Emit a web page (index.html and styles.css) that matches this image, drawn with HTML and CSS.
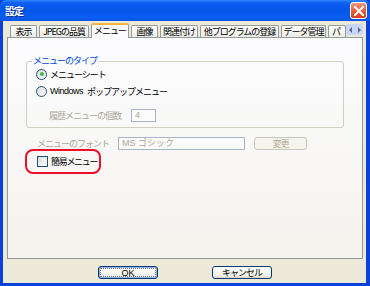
FILE: index.html
```html
<!DOCTYPE html>
<html lang="ja">
<head>
    <meta charset="UTF-8">
    <title>設定</title>
    <link rel="stylesheet" href="styles.css">
</head>
<body>
    <div class="window">
        <div class="titlebar">
            <span class="title">設定</span>
            <span class="close">
                <svg width="10" height="10" viewBox="0 0 10 10"><path d="M1 1L9 9M9 1L1 9" stroke="#fff" stroke-width="2" stroke-linecap="square"/></svg>
            </span>
        </div>
        <div class="client">
            <div class="tabs">
                <span class="tab t1">表示</span>
                <span class="tab t2">JPEGの品質</span>
                <span class="tab t3 active">メニュー</span>
                <span class="tab t4">画像</span>
                <span class="tab t5">関連付け</span>
                <span class="tab t6">他プログラムの登録</span>
                <span class="tab t7">データ管理</span>
                <span class="tab t8">パ</span>
                <span class="scroller">
                    <svg width="14" height="8" viewBox="0 0 14 8"><path d="M4 1L1 4L4 7Z M10 1L13 4L10 7Z" fill="#5a6a96"/></svg>
                </span>
            </div>
            <div class="panel">
                <div class="group">
                    <span class="legend">メニューのタイプ</span>
                    <div class="option"><span class="radio checked"></span>メニューシート</div>
                    <div class="option"><span class="radio"></span><span class="latin">Windows</span>ポップアップメニュー</div>
                    <div class="count-row">
                        <span class="dim">履歴メニューの個数</span>
                        <span class="field small">4</span>
                    </div>
                </div>
                <div class="font-row">
                    <span class="dim label">メニューのフォント</span>
                    <span class="field wide">MS ゴシック</span>
                    <span class="btn disabled">変更</span>
                </div>
                <div class="marked">
                    <span class="checkbox"></span>簡易メニュー
                </div>
            </div>
            <div class="buttons">
                <span class="btn main default">OK</span>
                <span class="btn main">キャンセル</span>
            </div>
        </div>
    </div>
</body>
</html>
```

FILE: styles.css
```css
html, body {
    margin: 0;
    padding: 0;
}

body {
    width: 370px;
    height: 286px;
    overflow: hidden;
    font-family: "Noto Sans CJK JP", "Liberation Sans", sans-serif;
    font-size: 9px;
    color: #000;
}

.window {
    width: 370px;
    height: 286px;
    display: flex;
    flex-direction: column;
    background: #0842d8;
}

.titlebar {
    height: 21px;
    display: flex;
    align-items: center;
    justify-content: space-between;
    padding: 0 3px 0 5px;
    background: linear-gradient(#2f86ff 0, #0a5ef0 15%, #0457e6 50%, #0a5ef5 85%, #0753df 100%);
    border-radius: 6px 6px 0 0;
}

.title {
    color: #fff;
    font-weight: bold;
    font-size: 10px;
    letter-spacing: -1px;
    text-shadow: 1px 1px 0 #0a2c8c;
}

.close {
    width: 17px;
    height: 17px;
    display: flex;
    align-items: center;
    justify-content: center;
    background: linear-gradient(#f09a80, #e2582f 60%, #cf4420);
    border: 1px solid #fff;
    border-radius: 3px;
    box-sizing: border-box;
}

.client {
    flex: 1;
    margin: 0 4px 3px 3px;
    background: #ece9d8;
    display: flex;
    flex-direction: column;
    padding: 2px 3px 0 4px;
}

.tabs {
    display: flex;
    align-items: flex-end;
    height: 14px;
    padding-left: 3px;
    position: relative;
    z-index: 1;
}

.tab {
    height: 12px;
    line-height: 11px;
    box-sizing: border-box;
    border: 1px solid #919b9c;
    border-bottom: none;
    border-radius: 2px 2px 0 0;
    background: linear-gradient(#fff, #ecebe6);
    margin-right: 2px;
    text-align: center;
    letter-spacing: -1px;
    white-space: nowrap;
}

.tab.active {
    height: 15px;
    line-height: 12px;
    background: #fcfcfe;
    border-top: 2px solid #f5b53a;
    margin-bottom: -1px;
}

.t1 { width: 27px; }
.t2 { width: 50px; }
.t3 { width: 38px; }
.t4 { width: 27px; }
.t5 { width: 38px; }
.t6 { width: 79px; }
.t7 { width: 45px; }
.t8 { width: 18px; text-align: left; padding-left: 3px; overflow: hidden; }

.scroller {
    position: absolute;
    right: 0;
    top: 1px;
    width: 17px;
    height: 11px;
    display: flex;
    align-items: center;
    justify-content: center;
    background: #c9d6f5;
    border-radius: 2px;
}

.panel {
    height: 222px;
    box-sizing: border-box;
    border: 1px solid #919b9c;
    background: linear-gradient(#fcfcfe, #f4f3ee);
    padding: 23px 18px 0 18px;
}

.group {
    position: relative;
    height: 67px;
    box-sizing: border-box;
    border: 1px solid #d0d0bf;
    border-radius: 3px;
    padding: 3px 0 0 9px;
}

.legend {
    position: absolute;
    top: -7px;
    left: 5px;
    padding: 0 1px;
    background: #fbfbfc;
    color: #0046d5;
    letter-spacing: -1px;
    line-height: 12px;
}

.option {
    display: flex;
    align-items: center;
    height: 16px;
    letter-spacing: -1px;
    margin-top: 1px;
    white-space: nowrap;
}

.latin {
    font-family: "Liberation Sans", sans-serif;
    letter-spacing: -0.5px;
    margin-right: 4px;
}

.radio {
    width: 9px;
    height: 9px;
    border: 1px solid #1c5180;
    border-radius: 50%;
    background: linear-gradient(135deg, #dcdcd6, #fff);
    margin-right: 3px;
    display: flex;
    align-items: center;
    justify-content: center;
}

.radio.checked::after {
    content: "";
    width: 4px;
    height: 4px;
    border-radius: 50%;
    background: #3fb93f;
}

.count-row {
    display: flex;
    align-items: center;
    margin: 10px 0 0 13px;
}

.dim {
    color: #aca899;
    letter-spacing: -1px;
    white-space: nowrap;
}

.field {
    height: 13px;
    line-height: 11px;
    box-sizing: border-box;
    border: 1px solid #a5b6cc;
    background: #fbfbf9;
    color: #aca899;
    padding-left: 3px;
    font-family: "Liberation Sans", "Noto Sans CJK JP", sans-serif;
    font-size: 9px;
    white-space: nowrap;
}

.field.small {
    width: 25px;
    margin-left: 10px;
}

.font-row {
    display: flex;
    align-items: center;
    margin-top: 9px;
    padding-left: 11px;
}

.font-row .label {
    width: 81px;
}

.field.wide {
    width: 127px;
}

.btn {
    display: flex;
    align-items: center;
    justify-content: center;
    box-sizing: border-box;
    border: 1px solid #003c74;
    border-radius: 3px;
    background: linear-gradient(#fff, #f0f0ea 80%, #d8d2c2);
    letter-spacing: -1px;
    white-space: nowrap;
}

.btn.disabled {
    width: 53px;
    height: 13px;
    margin-left: 9px;
    border-color: #c9c7ba;
    background: #f5f4ea;
    color: #aca899;
}

.marked {
    display: flex;
    align-items: center;
    width: 76px;
    height: 25px;
    box-sizing: border-box;
    margin: -1px 0 0 -1px;
    padding-left: 10px;
    border: 2px solid #e8102a;
    border-radius: 8px;
    letter-spacing: -1.3px;
    white-space: nowrap;
}

.checkbox {
    width: 9px;
    height: 9px;
    border: 1px solid #1c5180;
    background: linear-gradient(135deg, #dcdcd6, #fff);
    margin-right: 3px;
}

.buttons {
    display: flex;
    justify-content: center;
    gap: 54px;
    padding-top: 7px;
}

.btn.main {
    width: 60px;
    height: 13px;
}

.btn.default {
    box-shadow: inset 0 0 0 1px #8fb3ec;
    outline: 1px dotted #777;
    outline-offset: -3px;
    font-family: "Liberation Sans", sans-serif;
    letter-spacing: 0;
}
```
